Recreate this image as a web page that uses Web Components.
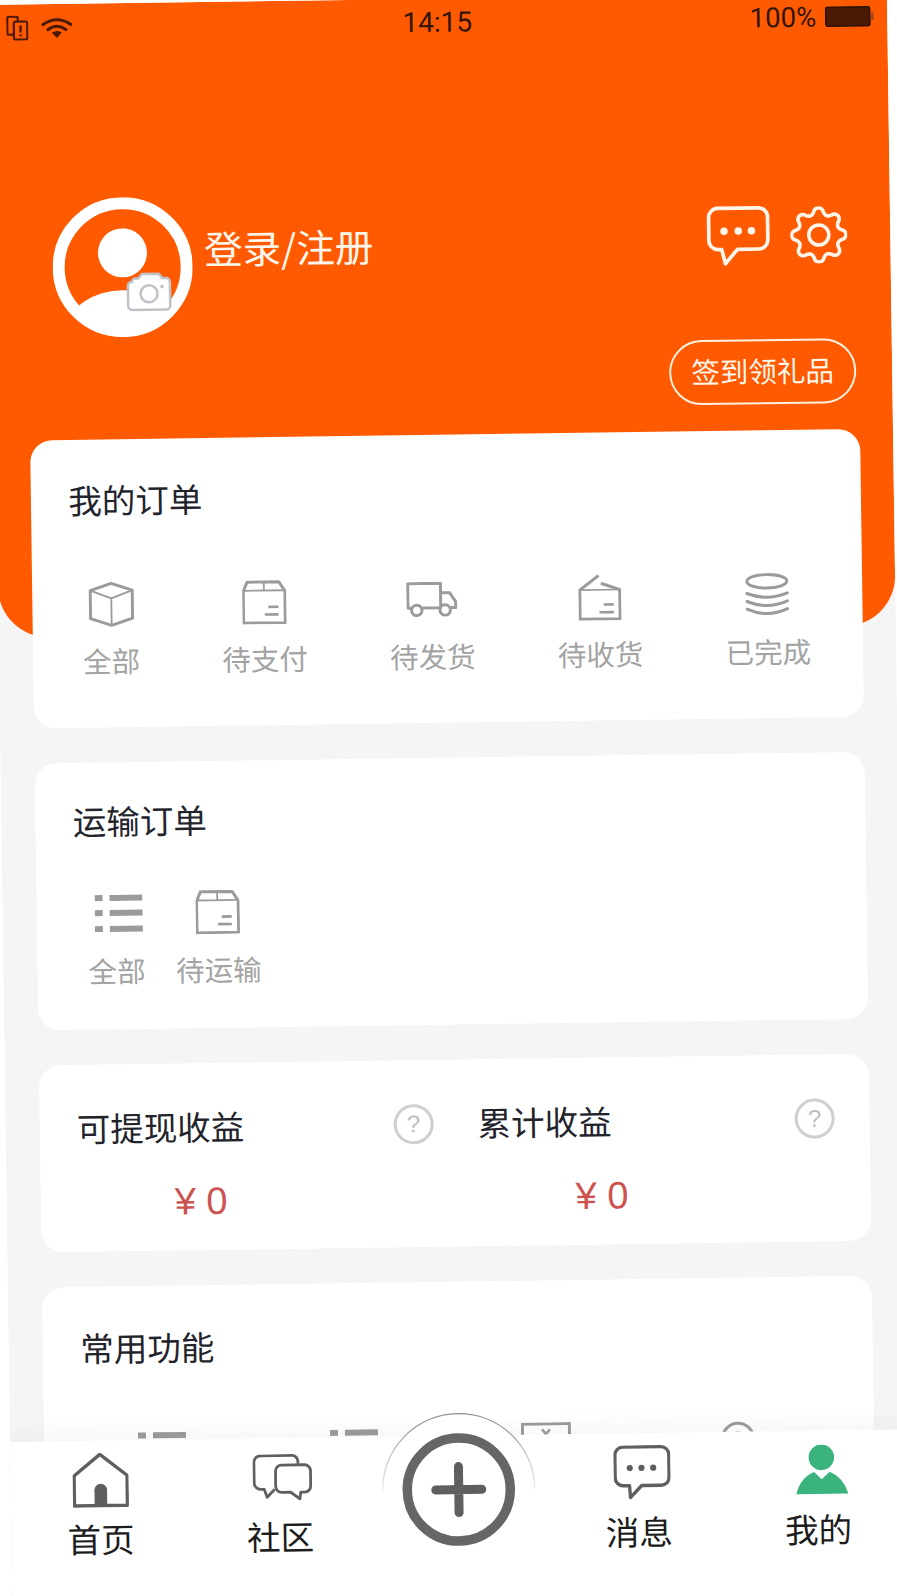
<!DOCTYPE html>
<html lang="zh-CN">
<head>
<meta charset="utf-8">
<title>我的</title>
<style>
  html, body { margin: 0; padding: 0; background: #fff; overflow: hidden; width: 897px; height: 1596px; }
</style>
</head>
<body>
<app-screen>
  <profile-header></profile-header>
  <main-list>
    <app-card title="我的订单" style="--h:288px;--tp:42px">
      <div style="display:flex;justify-content:space-between;padding:60px 52px 0 50px">
        <order-item label="全部" icon="cube"></order-item>
        <order-item label="待支付" icon="parcel"></order-item>
        <order-item label="待发货" icon="truck"></order-item>
        <order-item label="待收货" icon="wallet"></order-item>
        <order-item label="已完成" icon="coins"></order-item>
      </div>
    </app-card>
    <app-card title="运输订单" style="--h:267px;--tp:40px">
      <div style="display:flex;gap:30.5px;padding:48.5px 0 0 51px">
        <order-item label="全部" icon="list" style="--ix:4px"></order-item>
        <order-item label="待运输" icon="parcel"></order-item>
      </div>
    </app-card>
    <app-card style="--h:187px;--tp:0px">
      <div style="display:grid;grid-template-columns:357px 357px;gap:44px;padding-left:37px">
        <stat-col label="可提现收益"></stat-col>
        <stat-col label="累计收益"></stat-col>
      </div>
    </app-card>
    <app-card title="常用功能" style="--h:330px;--tp:42.5px">
      <tool-grid></tool-grid>
    </app-card>
  </main-list>
  <tab-bar></tab-bar>
</app-screen>

<script>
const G = '#9b9b9b', D = '#5f5f5f', C = '#fff5ea';
function gearPath() {
  let d = '';
  for (let i = 0; i < 144; i++) {
    const t = i / 144 * Math.PI * 2;
    const c = Math.cos(8 * t);
    const r = 24 + 3.2 * Math.sign(c) * Math.pow(Math.abs(c), 0.7);
    d += (i ? 'L' : 'M') + (28.5 + r * Math.sin(t)).toFixed(2) + ' ' + (28.5 - r * Math.cos(t)).toFixed(2);
  }
  return d + 'Z';
}
const ICONS = {
  cube: `<svg width="46" height="46" viewBox="-2 -2 46 46" fill="none" stroke="${G}" stroke-width="3" stroke-linejoin="round"><path d="M21 0 42 7V35L21 42 0 35V7Z"/><path d="M0 7 21 15 42 7M21 15V42" stroke-width="1.8"/></svg>`,
  parcel: `<svg width="44" height="44" viewBox="-1 -1 44 44" fill="none" stroke="${G}" stroke-width="3"><path d="M4 .7H35.7L41.7 10V41.7H0V10Z" stroke-linejoin="round"/><path d="M0 9.3H41.7M20.7 .7V9.3" stroke-width="1.8"/><path d="M25 25.7H35M21.3 33.3H35" stroke-width="2.7"/></svg>`,
  truck: `<svg width="51" height="35" viewBox="0 0 51 35" fill="none" stroke="${G}" stroke-width="3" stroke-linejoin="round"><path d="M5 26H1.5V1.5H34.3V25.5M34.3 11H43.3L49.3 20V26H44.5M16 26H33"/><circle cx="10.3" cy="28.3" r="5.2"/><circle cx="38.7" cy="28.3" r="5.2"/></svg>`,
  wallet: `<svg width="43" height="46" viewBox="0 0 43 46" fill="none" stroke="${G}" stroke-width="3"><path d="M20.5 1 1.5 15.3V44.5H41.5V15.3L22.7 8.7"/><path d="M1 15.3H42" stroke-width="1.6"/><path d="M25.3 30H35.3M21 37.7H35.3" stroke-width="2.7"/></svg>`,
  coins: `<svg width="44" height="43" viewBox="0 0 44 43" fill="none" stroke="${G}" stroke-width="3" stroke-linecap="round"><ellipse cx="21.7" cy="8" rx="20" ry="6.8"/><path d="M1.5 20Q21.7 28 42 20M1.5 28Q21.7 36.5 42 28M1.5 35.7Q21.7 45 42 35.7"/></svg>`,
  list: `<svg width="48" height="38" viewBox="0 0 48 38" fill="${G}"><rect y=".5" width="8" height="6"/><rect x="15" y=".5" width="33" height="6"/><rect y="15.5" width="8" height="6"/><rect x="15" y="15.5" width="33" height="6"/><rect y="31.5" width="8" height="6"/><rect x="15" y="31.5" width="33" height="6"/></svg>`,
  chat: `<svg width="66" height="61" viewBox="0 0 64 60" fill="none" stroke="${C}" stroke-width="3.6" stroke-linejoin="round"><path d="M12 2.5H52a9 9 0 0 1 9 9V34a9 9 0 0 1-9 9H31L19 57 15.5 43H12a9 9 0 0 1-9-9V11.5a9 9 0 0 1 9-9Z"/><g fill="${C}" stroke="none"><circle cx="18" cy="25" r="3.7"/><circle cx="32" cy="25" r="3.7"/><circle cx="45" cy="25" r="3.7"/></g></svg>`,
  gear: `<svg width="57" height="57" viewBox="0 0 57 57" fill="none" stroke="${C}" stroke-width="3.6" stroke-linejoin="round"><path d="${gearPath()}"/><circle cx="28.5" cy="28.5" r="10"/></svg>`,
  home: `<svg width="56" height="55" viewBox="0 0 56 55" fill="none" stroke="${D}" stroke-width="3.4" stroke-linejoin="round"><path d="M27.5 1.8 54.5 23V53H1.5V23Z"/><path d="M21.7 53V37.5a6.3 6.3 0 0 1 12.6 0V53Z" fill="${D}" stroke="none"/></svg>`,
  community: `<svg width="60" height="47" viewBox="0 0 60 47" fill="none" stroke="${D}" stroke-width="2.8" stroke-linejoin="round"><path d="M45.5 10V7.5a6 6 0 0 0-6-6H8a6.5 6.5 0 0 0-6.5 6.5V28.5a6.5 6.5 0 0 0 6.5 6.5H11.5L14.3 43 22 35"/><path d="M29 11H52a6 6 0 0 1 6 6V32.3a6 6 0 0 1-6 6H48L47 45 38 38.3H29a6 6 0 0 1-6-6V17a6 6 0 0 1 6-6Z"/></svg>`,
  message: `<svg width="57" height="55" viewBox="0 0 55 53" fill="none" stroke="${D}" stroke-width="3.2" stroke-linejoin="round"><path d="M9 1.8H46a7.5 7.5 0 0 1 7.5 7.5V31.5a7.5 7.5 0 0 1-7.5 7.5H27L16 50.5 15.3 39H9a7.5 7.5 0 0 1-7.5-7.5V9.3A7.5 7.5 0 0 1 9 1.8Z"/><g fill="${D}" stroke="none"><circle cx="15.7" cy="22" r="3"/><circle cx="27" cy="22" r="3"/><circle cx="38.3" cy="22" r="3"/></g></svg>`,
  me: `<svg width="53" height="50" viewBox="0 0 51 49" fill="#3bb37d"><circle cx="25" cy="12.5" r="12.5"/><path d="M0 48.3Q4 32 17.7 26.7L25 34 33 26.7Q46 32 51 48.3Z"/></svg>`,
  gridList: `<svg width="48" height="38" viewBox="0 0 48 38" fill="${G}"><rect y=".5" width="8" height="6"/><rect x="15" y=".5" width="33" height="6"/></svg>`,
  gridBox: `<svg width="50" height="46" viewBox="0 0 50 46" fill="none" stroke="${G}" stroke-width="3"><rect x="1.5" y="1.5" width="47" height="42"/><path d="M21 7 29 16M29 7 21 16" stroke-width="2.5"/></svg>`,
  gridRing: `<svg width="34" height="46" viewBox="0 0 34 46" fill="none" stroke="${G}" stroke-width="3"><circle cx="17" cy="19" r="15.5"/><circle cx="17" cy="18" r="5"/></svg>`
};

function def(name, css, html) {
  customElements.define(name, class extends HTMLElement {
    constructor() {
      super();
      const r = this.attachShadow({ mode: 'open' });
      const attr = k => this.getAttribute(k) || '';
      r.innerHTML = `<style>${css}</style>` + (typeof html === 'function' ? html(attr) : html);
    }
  });
}

const CJK = `"Noto Sans CJK SC", "Liberation Sans", sans-serif`;

def('app-screen', `
  :host { display:block; position:relative; width:897px; height:1640px; overflow:hidden; background:#f5f5f5;
    font-family:${CJK}; transform-origin:0 0; transform:translate(-10px,5px) rotate(-0.8deg); }
`, `<slot></slot>`);

def('status-bar', `
  :host { display:grid; grid-template-columns:1fr auto 1fr; align-items:center; height:47px; padding:0 13px 0 16px; color:#33140a; }
  .l { display:flex; align-items:center; gap:13px; }
  .t { font:28px/47px Roboto, "Liberation Sans", sans-serif; margin-right:6px; }
  .r { display:flex; justify-content:flex-end; align-items:center; gap:8px; font:27.5px/47px Roboto, "Liberation Sans", sans-serif; }
  svg { display:block; }
`, `
  <div class="l">
    <svg width="22" height="25" viewBox="0 0 22 25" fill="none" stroke="#4b1a08" stroke-width="2.2" stroke-linejoin="round"><path d="M7.5 19H2.5a1.5 1.5 0 0 1-1.5-1.5V2.5A1.5 1.5 0 0 1 2.5 1H10a1.5 1.5 0 0 1 1.5 1.5V6"/><rect x="7.5" y="6" width="13.5" height="18" rx="2"/><path d="M14.2 10V17M14.2 19V21" stroke-width="2.4"/></svg>
    <svg width="31" height="22" viewBox="0 0 31 22" fill="none" stroke="#4b1a08" stroke-width="3" stroke-linecap="round"><path d="M1.5 7.5Q15.5 -2 29.5 7.5M6.5 12.5Q15.5 6 24.5 12.5"/><path d="M10.5 15.5Q15.5 12.5 20.5 15.5L15.5 21Z" fill="#4b1a08" stroke="none"/></svg>
  </div>
  <div class="t">14:15</div>
  <div class="r"><span>100%</span>
    <svg width="50" height="21" viewBox="0 0 49 21"><rect x="1" y="1" width="44" height="19" rx="2" fill="#4a1b02" stroke="#2e1105" stroke-width="1.5"/><rect x="46" y="6.5" width="3" height="8" rx="1" fill="#a8481a"/></svg>
  </div>
`);

def('profile-header', `
  :host { display:block; height:633px; background:#ff5a00; border-radius:0 0 50px 50px; }
  .row { display:flex; align-items:flex-start; padding:146.7px 36px 0 58.5px; }
  .name { margin:27px 0 0 12px; font-size:38.6px; line-height:48px; color:#fff6ec; white-space:nowrap; }
  .side { margin-left:auto; display:flex; flex-direction:column; align-items:flex-end; padding-top:18.3px; }
  .icons { display:flex; align-items:center; gap:19px; margin-right:7.5px; height:60px; }
  .btn { margin-top:73.5px; box-sizing:border-box; width:187px; height:65px; border:2.5px solid #fff0e0; border-radius:33px;
    color:#fff6ec; font-size:28.5px; line-height:58px; text-align:center; white-space:nowrap; }
  svg { display:block; }
`, () => `
  <status-bar></status-bar>
  <div class="row">
    <svg width="140" height="140" viewBox="0 0 140 140">
      <defs><clipPath id="c"><circle cx="70" cy="70" r="64"/></clipPath></defs>
      <circle cx="70" cy="70" r="64" fill="none" stroke="#fff" stroke-width="12"/>
      <circle cx="70" cy="55.7" r="24.5" fill="#fff"/>
      <ellipse cx="70" cy="130" rx="55" ry="37" fill="#fff" clip-path="url(#c)"/>
      <path d="M79 85a3.5 3.5 0 0 1 3.5-3.5H85.5L89 77H106L109.5 81.5H113a4 4 0 0 1 4 4V109a4 4 0 0 1-4 4H79a4 4 0 0 1-4-4V88a3.5 3.5 0 0 1 4-3Z" fill="#fff" stroke="#bfc2c9" stroke-width="2.5" stroke-linejoin="round"/>
      <circle cx="96" cy="97" r="8.5" fill="none" stroke="#bfc2c9" stroke-width="2.5"/>
      <circle cx="109" cy="90" r="1.8" fill="#bfc2c9"/>
    </svg>
    <div class="name">登录/注册</div>
    <div class="side">
      <div class="icons"><ui-icon name="chat"></ui-icon><ui-icon name="gear"></ui-icon></div>
      <div class="btn">签到领礼品</div>
    </div>
  </div>
`);

def('ui-icon', `:host { display:block; line-height:0; } svg { display:block; }`, a => ICONS[a('name')] || '');

def('main-list', `:host { display:block; margin-top:-197.5px; padding:0 33px 0 34px; }`, `<slot></slot>`);

def('app-card', `
  :host { display:block; box-sizing:border-box; height:var(--h); margin-bottom:35px; padding-top:var(--tp); background:#fff; border-radius:22px; }
  .title { font-size:33.5px; line-height:40px; margin:-1.5px 0 1.5px; color:#22232b; padding-left:37.5px; white-space:nowrap; }
  .title:empty { display:none; }
`, a => `<div class="title">${a('title')}</div><slot></slot>`);

def('order-item', `
  :host { display:flex; flex-direction:column; align-items:center; }
  .i { height:46px; display:flex; align-items:center; justify-content:center; padding-left:var(--ix,0); }
  .l { margin-top:16.6px; font-size:28.5px; line-height:34px; color:#a3a3a3; white-space:nowrap; }
`, a => `<div class="i"><ui-icon name="${a('icon')}"></ui-icon></div><div class="l">${a('label')}</div>`);

def('stat-col', `
  :host { display:block; padding-top:44.5px; }
  .h { display:flex; justify-content:space-between; align-items:center; height:40px; }
  .t { font-size:33.5px; line-height:40px; margin-top:-1.5px; color:#22232b; white-space:nowrap; }
  .q { box-sizing:border-box; width:40px; height:40px; border:3px solid #cfcfcf; border-radius:50%; text-align:center;
    font:24px/33px "Liberation Sans", sans-serif; color:#bdbdbd; }
  .a { margin:30px 0 0 97px; font:38px/48px "Liberation Sans", sans-serif; color:#cc5350; white-space:pre; }
`, a => `<div class="h"><div class="t">${a('label')}</div><div class="q">?</div></div><div class="a">¥ 0</div>`);

def('tool-grid', `
  :host { display:grid; grid-template-columns:repeat(4, 192px); padding:60px 0 0 22px; }
  div { display:flex; justify-content:center; align-items:flex-start; height:46px; }
`, `
  <div style="padding-top:4px"><ui-icon name="gridList"></ui-icon></div>
  <div style="padding-top:4px"><ui-icon name="gridList"></ui-icon></div>
  <div><ui-icon name="gridBox"></ui-icon></div>
  <div><ui-icon name="gridRing"></ui-icon></div>
`);

def('tab-item', `
  :host { display:flex; flex-direction:column; align-items:center; }
  .i { height:60px; margin-top:9px; display:flex; align-items:center; padding-left:var(--ix,0); }
  .l { margin-top:9px; font-size:33.5px; line-height:40px; color:#1c1c1c; white-space:nowrap; }
`, a => `<div class="i"><ui-icon name="${a('icon')}"></ui-icon></div><div class="l">${a('label')}</div>`);

def('tab-plus', `
  :host { display:flex; justify-content:center; height:0; }
  svg { display:block; margin-top:-25.7px; flex:none; }
`, `
  <svg width="160" height="160" viewBox="0 0 160 160">
    <defs><linearGradient id="a" x1="0" x2="0" y1="0" y2="1"><stop offset="0" stop-color="#8c8c8c"/><stop offset="0.8" stop-color="#d9d9d9"/><stop offset="1" stop-color="#efefef"/></linearGradient></defs>
    <path d="M4 80A76 76 0 0 1 156 80Z" fill="#fff"/>
    <path d="M4 80A76 76 0 0 1 156 80" fill="none" stroke="url(#a)" stroke-width="1.4"/>
    <circle cx="80" cy="80" r="51.5" fill="#fff" stroke="#666" stroke-width="9.5"/>
    <path d="M57 80H103M80 57V103" stroke="#5f5f5f" stroke-width="9" stroke-linecap="round"/>
  </svg>
`);

def('tab-bar', `
  :host { position:absolute; left:0; right:0; top:1437px; bottom:0; display:grid; grid-template-columns:repeat(5, 1fr);
    background:#fff; box-shadow:0 -7px 18px rgba(110,60,60,.05); }
`, `
  <tab-item label="首页" icon="home"></tab-item>
  <tab-item label="社区" icon="community" style="--ix:5px"></tab-item>
  <tab-plus></tab-plus>
  <tab-item label="消息" icon="message" style="--ix:7px"></tab-item>
  <tab-item label="我的" icon="me" style="--ix:9px"></tab-item>
`);
</script>
</body>
</html>
